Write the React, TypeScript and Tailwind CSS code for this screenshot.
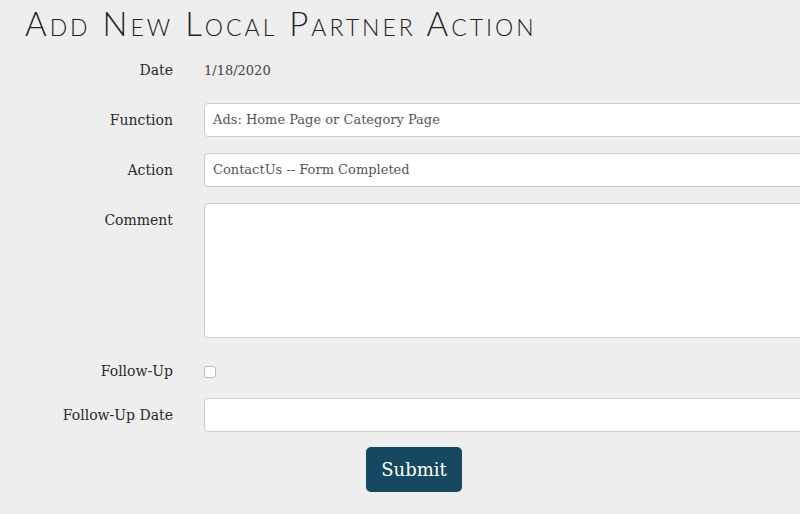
import React from 'react';

const slab = { fontFamily: '"DejaVu Serif", "Liberation Serif", serif' };

const Row: React.FC<{ label: string; top?: boolean; className?: string; children: React.ReactNode }> = ({
  label,
  top,
  className,
  children,
}) => (
  <div className={`flex ${top ? 'items-start' : 'items-center'} ${className ?? ''}`}>
    <div className={`w-[173px] shrink-0 text-right text-[14px] text-[#2a2a2a] ${top ? 'leading-[34px]' : ''}`}>{label}</div>
    <div className="ml-[31px] flex-1">{children}</div>
  </div>
);

export default function App() {
  return (
    <div className="w-[800px] h-[514px] overflow-hidden bg-[#eeeeee]" style={slab}>
      <h1
        className="pl-[25px] pt-[3px] text-[33px] leading-[40px] tracking-[3px] text-[#222] font-light [font-variant:small-caps]"
        style={{ fontFamily: 'Lato, "Open Sans", sans-serif' }}>
        Add New Local Partner Action
      </h1>
      <div className="mt-[10px]">
        <Row label="Date" className="h-[34px] mb-4">
          <span className="text-[13px] text-[#444]">1/18/2020</span>
        </Row>
        <Row label="Function" className="mb-4">
          <div className="h-[34px] w-[640px] bg-white border border-[#ccc] rounded-[4px] flex items-center px-[8px] text-[13px] text-[#555]">
            Ads: Home Page or Category Page
          </div>
        </Row>
        <Row label="Action" className="mb-4">
          <div className="h-[34px] w-[640px] bg-white border border-[#ccc] rounded-[4px] flex items-center px-[8px] text-[13px] text-[#555]">
            ContactUs -- Form Completed
          </div>
        </Row>
        <Row label="Comment" top className="mb-[18px]">
          <div className="h-[135px] w-[640px] bg-white border border-[#ccc] rounded-[4px]" />
        </Row>
        <Row label="Follow-Up" className="h-[30px] mb-[12px]">
          <div className="w-[12px] h-[12px] mt-[1px] bg-white border border-[#bbb] rounded-[3px]" />
        </Row>
        <Row label="Follow-Up Date" className="mb-[15px]">
          <div className="h-[34px] w-[640px] bg-white border border-[#ccc] rounded-[4px]" />
        </Row>
        <div className="pl-[366px]">
          <button className="w-[96px] h-[45px] rounded-[5px] bg-[#174861] text-white text-[18px]">Submit</button>
        </div>
      </div>
    </div>
  );
}
